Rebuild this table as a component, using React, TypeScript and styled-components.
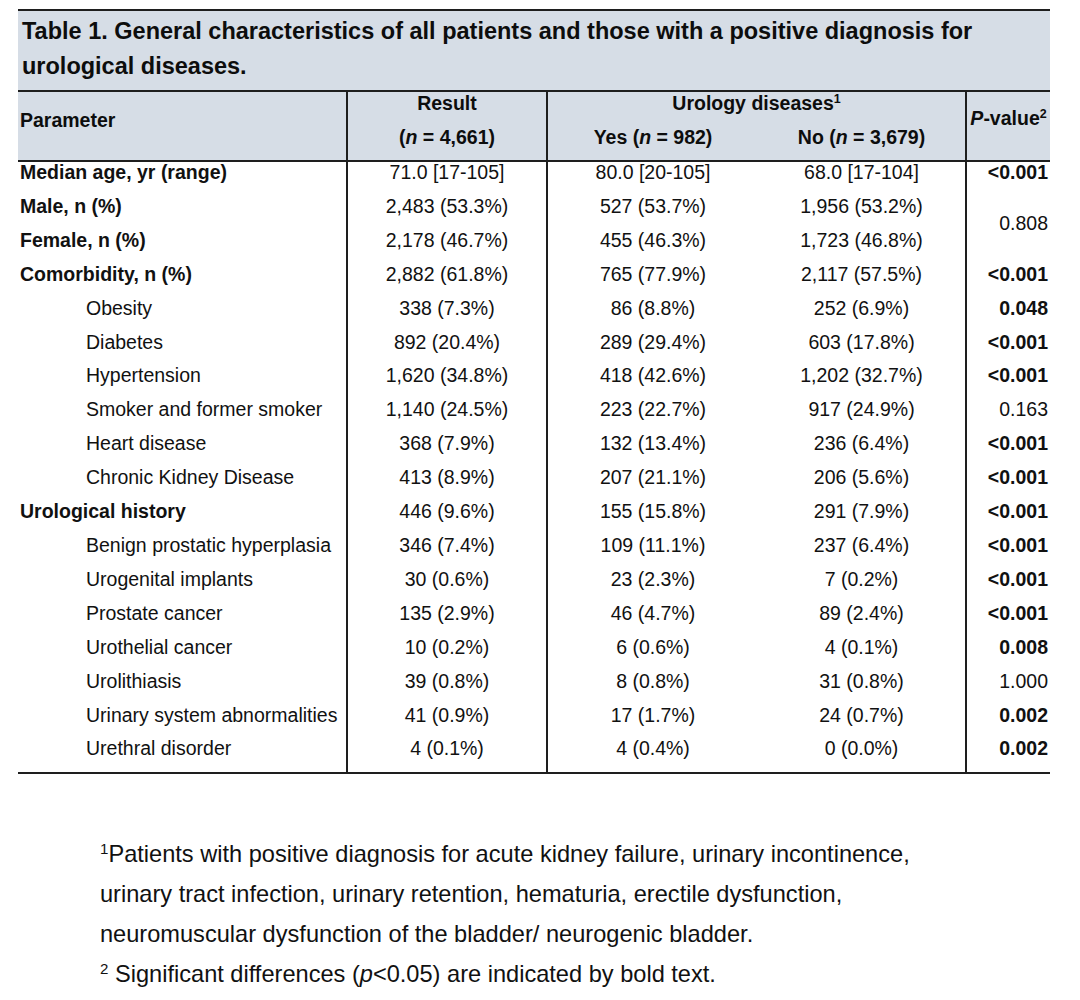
import React from "react";
import styled, { createGlobalStyle } from "styled-components";

const GlobalStyle = createGlobalStyle`
  html, body { margin: 0; padding: 0; background: #ffffff; }
  body { font-family: "Liberation Sans", Arial, sans-serif; color: #111111; }
`;

const Page = styled.div`
  width: 1032px;
  padding: 9px 0 0 18px;
`;

const TitleBlock = styled.div`
  border-top: 2px solid #1e1e1e;
  background: #d6dde6;
  padding: 3px 0 6px 4px;
  font-size: 23.5px;
  font-weight: 700;
  line-height: 35px;
  color: #0d0d0d;
`;

const DataTable = styled.table`
  width: 1032px;
  border-collapse: collapse;
  table-layout: fixed;
  font-size: 19.5px;
  border-top: 2px solid #1e1e1e;
  border-bottom: 2px solid #1e1e1e;
`;

const HeadRow = styled.tr`
  background: #d6dde6;
`;

const HeadCell = styled.th<{ $align?: "left" | "center" | "right"; $line?: boolean; $last?: boolean }>`
  font-weight: 700;
  text-align: ${(p) => p.$align ?? "center"};
  vertical-align: ${(p) => (p.$last ? "top" : "middle")};
  line-height: 22px;
  padding: 0 2px 12px 2px;
  border-left: ${(p) => (p.$line ? "2px solid #1e1e1e" : "none")};
  border-bottom: ${(p) => (p.$last ? "2px solid #1e1e1e" : "none")};
  white-space: nowrap;
  color: #0d0d0d;
`;

const HeadLabel = styled.span<{ $offset: number }>`
  display: block;
  padding-top: ${(p) => p.$offset}px;
  text-align: inherit;
`;

const BodyCell = styled.td<{
  $align?: "left" | "center" | "right";
  $line?: boolean;
  $bold?: boolean;
  $indent?: boolean;
}>`
  text-align: ${(p) => p.$align ?? "center"};
  vertical-align: middle;
  font-weight: ${(p) => (p.$bold ? 700 : 400)};
  line-height: 21.9px;
  height: 21.9px;
  padding: 0 ${(p) => (p.$align === "right" ? "2px" : "0")} 12px
    ${(p) => (p.$indent ? "68px" : p.$align === "left" ? "2px" : "0")};
  border-left: ${(p) => (p.$line ? "2px solid #1e1e1e" : "none")};
  white-space: nowrap;
  color: #111111;
`;

const Footnotes = styled.div`
  margin-top: 60px;
  padding-left: 82px;
  font-size: 23.6px;
  line-height: 40px;
  color: #111111;
`;

const FootLine = styled.div``;

const Sup = styled.sup`
  font-size: 0.64em;
  line-height: 0;
  vertical-align: 0.55em;
`;

type Row = {
  label: string;
  group?: boolean;
  r: string;
  y: string;
  n: string;
  p?: string;
  pBold?: boolean;
  span?: number;
};

const rows: Row[] = [
  { label: "Median age, yr (range)", group: true, r: "71.0 [17-105]", y: "80.0 [20-105]", n: "68.0 [17-104]", p: "<0.001", pBold: true },
  { label: "Male, n (%)", group: true, r: "2,483 (53.3%)", y: "527 (53.7%)", n: "1,956 (53.2%)", p: "0.808", span: 2 },
  { label: "Female, n (%)", group: true, r: "2,178 (46.7%)", y: "455 (46.3%)", n: "1,723 (46.8%)" },
  { label: "Comorbidity, n (%)", group: true, r: "2,882 (61.8%)", y: "765 (77.9%)", n: "2,117 (57.5%)", p: "<0.001", pBold: true },
  { label: "Obesity", r: "338 (7.3%)", y: "86 (8.8%)", n: "252 (6.9%)", p: "0.048", pBold: true },
  { label: "Diabetes", r: "892 (20.4%)", y: "289 (29.4%)", n: "603 (17.8%)", p: "<0.001", pBold: true },
  { label: "Hypertension", r: "1,620 (34.8%)", y: "418 (42.6%)", n: "1,202 (32.7%)", p: "<0.001", pBold: true },
  { label: "Smoker and former smoker", r: "1,140 (24.5%)", y: "223 (22.7%)", n: "917 (24.9%)", p: "0.163" },
  { label: "Heart disease", r: "368 (7.9%)", y: "132 (13.4%)", n: "236 (6.4%)", p: "<0.001", pBold: true },
  { label: "Chronic Kidney Disease", r: "413 (8.9%)", y: "207 (21.1%)", n: "206 (5.6%)", p: "<0.001", pBold: true },
  { label: "Urological history", group: true, r: "446 (9.6%)", y: "155 (15.8%)", n: "291 (7.9%)", p: "<0.001", pBold: true },
  { label: "Benign prostatic hyperplasia", r: "346 (7.4%)", y: "109 (11.1%)", n: "237 (6.4%)", p: "<0.001", pBold: true },
  { label: "Urogenital implants", r: "30 (0.6%)", y: "23 (2.3%)", n: "7 (0.2%)", p: "<0.001", pBold: true },
  { label: "Prostate cancer", r: "135 (2.9%)", y: "46 (4.7%)", n: "89 (2.4%)", p: "<0.001", pBold: true },
  { label: "Urothelial cancer", r: "10 (0.2%)", y: "6 (0.6%)", n: "4 (0.1%)", p: "0.008", pBold: true },
  { label: "Urolithiasis", r: "39 (0.8%)", y: "8 (0.8%)", n: "31 (0.8%)", p: "1.000" },
  { label: "Urinary system abnormalities", r: "41 (0.9%)", y: "17 (1.7%)", n: "24 (0.7%)", p: "0.002", pBold: true },
  { label: "Urethral disorder", r: "4 (0.1%)", y: "4 (0.4%)", n: "0 (0.0%)", p: "0.002", pBold: true },
];

export default function App() {
  return (
    <>
      <GlobalStyle />
      <Page>
        <TitleBlock>
          Table 1. General characteristics of all patients and those with a positive diagnosis for
          <br />
          urological diseases.
        </TitleBlock>
        <DataTable>
          <colgroup>
            <col style={{ width: 329 }} />
            <col style={{ width: 200 }} />
            <col style={{ width: 211 }} />
            <col style={{ width: 208 }} />
            <col style={{ width: 84 }} />
          </colgroup>
          <thead>
            <HeadRow>
              <HeadCell $align="left" rowSpan={2} $last>
                <HeadLabel $offset={17}>Parameter</HeadLabel>
              </HeadCell>
              <HeadCell $line>Result</HeadCell>
              <HeadCell $line colSpan={2}>
                Urology diseases<Sup>1</Sup>
              </HeadCell>
              <HeadCell $line rowSpan={2} $last>
                <HeadLabel $offset={15}>
                  <i>P</i>-value<Sup>2</Sup>
                </HeadLabel>
              </HeadCell>
            </HeadRow>
            <HeadRow>
              <HeadCell $line $last>
                (<i>n</i> = 4,661)
              </HeadCell>
              <HeadCell $line $last>
                Yes (<i>n</i> = 982)
              </HeadCell>
              <HeadCell $last>
                No (<i>n</i> = 3,679)
              </HeadCell>
            </HeadRow>
          </thead>
          <tbody>
            {rows.map((row) => (
              <tr key={row.label}>
                <BodyCell $align="left" $bold={row.group} $indent={!row.group}>
                  {row.label}
                </BodyCell>
                <BodyCell $line>{row.r}</BodyCell>
                <BodyCell $line>{row.y}</BodyCell>
                <BodyCell>{row.n}</BodyCell>
                {row.p !== undefined && (
                  <BodyCell $line $align="right" $bold={row.pBold} rowSpan={row.span ?? 1}>
                    {row.p}
                  </BodyCell>
                )}
              </tr>
            ))}
          </tbody>
        </DataTable>
        <Footnotes>
          <FootLine>
            <Sup>1</Sup>Patients with positive diagnosis for acute kidney failure, urinary incontinence,
          </FootLine>
          <FootLine>urinary tract infection, urinary retention, hematuria, erectile dysfunction,</FootLine>
          <FootLine>neuromuscular dysfunction of the bladder/ neurogenic bladder.</FootLine>
          <FootLine>
            <Sup>2</Sup> Significant differences (<i>p</i>&lt;0.05) are indicated by bold text.
          </FootLine>
        </Footnotes>
      </Page>
    </>
  );
}
